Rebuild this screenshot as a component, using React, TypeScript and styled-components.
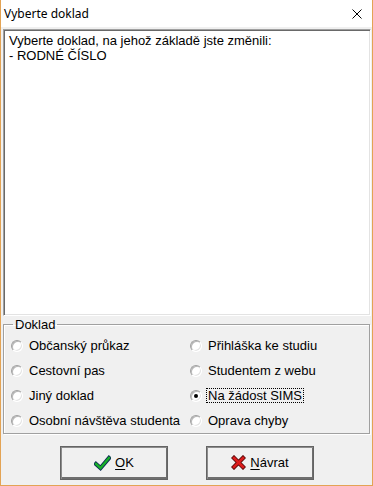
import styled, { createGlobalStyle } from 'styled-components';

const GlobalStyle = createGlobalStyle`
	html, body {
		margin: 0;
		padding: 0;
		background: #ffffff;
	}
	* {
		box-sizing: border-box;
	}
`;

const LEFT = ['Občanský průkaz', 'Cestovní pas', 'Jiný doklad', 'Osobní návštěva studenta'];
const RIGHT = ['Přihláška ke studiu', 'Studentem z webu', 'Na žádost SIMS', 'Oprava chyby'];
const SELECTED = 'Na žádost SIMS';

const CheckIcon = () => (
	<svg width="17" height="16" viewBox="0 0 17 16">
		<path d="M2 9 L6.5 13 L15 3" fill="none" stroke="#0b2a55" strokeWidth="4.2" strokeLinejoin="miter" strokeLinecap="square" />
		<path d="M2 9 L6.5 13 L15 3" fill="none" stroke="#18b02a" strokeWidth="2.4" strokeLinejoin="miter" strokeLinecap="square" />
	</svg>
);

const CrossIcon = () => (
	<svg width="15" height="15" viewBox="0 0 15 15">
		<path d="M3 3 L12 12 M12 3 L3 12" fill="none" stroke="#5a0b0b" strokeWidth="4.4" strokeLinecap="square" />
		<path d="M3 3 L12 12 M12 3 L3 12" fill="none" stroke="#dc1c1c" strokeWidth="2.6" strokeLinecap="square" />
	</svg>
);

const App = () => {
	const renderOption = (label: string) => (
		<Option key={label}>
			<Radio $checked={label === SELECTED} />
			<OptionLabel $focused={label === SELECTED}>{label}</OptionLabel>
		</Option>
	);

	return (
		<>
			<GlobalStyle />
			<Window>
				<TitleBar>
					<span className="title">Vyberte doklad</span>
					<CloseIcon viewBox="0 0 10 10">
						<path d="M0.5 0.5 L9.5 9.5 M9.5 0.5 L0.5 9.5" stroke="#000" strokeWidth="1" />
					</CloseIcon>
				</TitleBar>
				<Client>
					<MessageBox>
						<p>Vyberte doklad, na jehož základě jste změnili:</p>
						<p>- RODNÉ ČÍSLO</p>
					</MessageBox>
					<GroupBox>
						<legend>Doklad</legend>
						<Options>
							{LEFT.map((l, i) => [renderOption(l), renderOption(RIGHT[i])])}
						</Options>
					</GroupBox>
					<ButtonRow>
						<Button>
							<CheckIcon />
							<span>
								<u>O</u>K
							</span>
						</Button>
						<Button>
							<CrossIcon />
							<span>
								<u>N</u>ávrat
							</span>
						</Button>
					</ButtonRow>
				</Client>
			</Window>
		</>
	);
};

const Window = styled.div`
	width: 373px;
	height: 486px;
	display: flex;
	flex-direction: column;
	border: 1px solid #e3a354;
	border-top: none;
	background: #f0f0f0;
	font-family: 'Liberation Sans', Arial, sans-serif;
	font-size: 13px;
	color: #000;
`;

const TitleBar = styled.div`
	height: 27px;
	flex: none;
	background: #fff;
	display: flex;
	align-items: center;
	justify-content: space-between;
	padding: 0 10px 1px 3px;

	.title {
		font-family: 'Noto Sans', 'Open Sans', sans-serif;
		font-size: 12px;
		color: #000;
	}
`;

const CloseIcon = styled.svg`
	width: 10px;
	height: 10px;
	margin-top: 1px;
`;

const Client = styled.div`
	flex: 1;
	display: flex;
	flex-direction: column;
	padding: 2px 1px 0 2px;
`;

const MessageBox = styled.div`
	height: 287px;
	flex: none;
	background: #fff;
	border-style: solid;
	border-width: 1px;
	border-color: #a0a0a0 #ffffff #ffffff #a0a0a0;
	box-shadow: inset 1px 1px 0 #696969, inset -1px -1px 0 #e3e3e3;
	padding: 3px 5px;
	line-height: 15px;

	p {
		margin: 0;
	}
`;

const GroupBox = styled.fieldset`
	margin: 1px 1px 0 0;
	padding: 0 7px 0 7px;
	border: 1px solid #a0a0a0;
	box-shadow: inset 1px 1px 0 #fff, 1px 1px 0 #fff;
	min-width: 0;

	legend {
		padding: 0 2px;
		margin-left: 2px;
		line-height: 15px;
	}
`;

const Options = styled.div`
	display: grid;
	grid-template-columns: 179px 1fr;
	grid-auto-rows: 25px;
	padding-top: 1px;
`;

const Option = styled.div`
	display: flex;
	align-items: center;
	gap: 4px;
`;

const Radio = styled.span<{ $checked?: boolean }>`
	width: 12px;
	height: 12px;
	flex: none;
	border-radius: 50%;
	background: #fff;
	border-style: solid;
	border-width: 1px;
	border-color: #a0a0a0 #ffffff #ffffff #a0a0a0;
	box-shadow: inset 1px 1px 0 #b8b8b8, inset -1px -1px 0 #e3e3e3;
	display: flex;
	align-items: center;
	justify-content: center;

	&::after {
		content: '';
		width: 4px;
		height: 4px;
		border-radius: 50%;
		background: ${(p) => (p.$checked ? '#000' : 'transparent')};
	}
`;

const OptionLabel = styled.span<{ $focused?: boolean }>`
	padding: 0 1px;
	line-height: 13px;
	border: 1px dotted ${(p) => (p.$focused ? '#000' : 'transparent')};
`;

const ButtonRow = styled.div`
	display: flex;
	justify-content: center;
	gap: 38px;
	margin-top: 12px;
`;

const Button = styled.button`
	width: 108px;
	height: 34px;
	display: flex;
	align-items: center;
	justify-content: center;
	gap: 4px;
	padding: 0 0 1px;
	background: #f0f0f0;
	border: 1px solid #646464;
	box-shadow: inset 1px 1px 0 #8c8c8c, inset -1px -2px 0 #6e6e6e;
	font-family: 'Liberation Sans', Arial, sans-serif;
	font-size: 13px;
	color: #000;

	u {
		text-decoration-thickness: 1px;
		text-underline-offset: 2px;
	}
`;

export default App;
